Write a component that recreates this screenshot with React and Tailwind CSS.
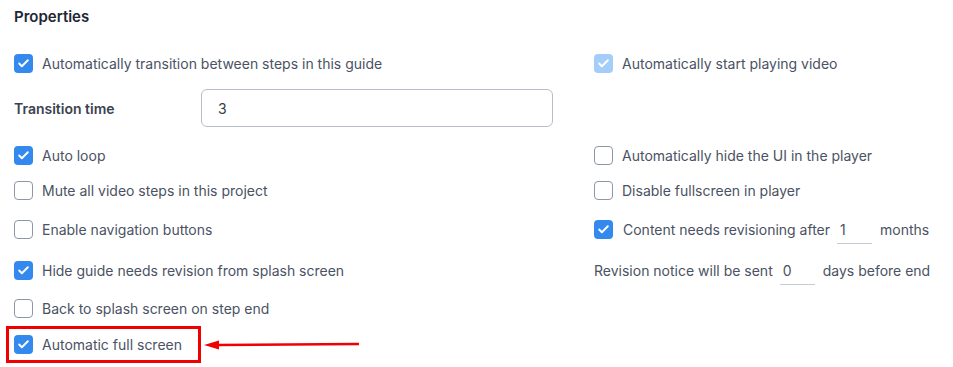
import { Check } from 'lucide-react';

function Box({ checked, disabled }) {
  if (!checked) {
    return <span className="w-[19px] h-[19px] shrink-0 rounded-[4px] border border-[#8e97a6] bg-white" />;
  }
  return (
    <span
      className={`w-[19px] h-[19px] shrink-0 rounded-[4px] flex items-center justify-center ${
        disabled ? 'bg-[#a4cdfa]' : 'bg-[#3389ee]'
      }`}
    >
      <Check size={13} strokeWidth={3.5} color="white" />
    </span>
  );
}

function Item({ label, checked, disabled }) {
  return (
    <label className="flex items-center gap-[9px]">
      <Box checked={checked} disabled={disabled} />
      <span>{label}</span>
    </label>
  );
}

function Row({ children, className = '' }) {
  return <div className={`grid grid-cols-[580px_1fr] items-center h-[30px] ${className}`}>{children}</div>;
}

function Small({ value }) {
  return (
    <span className="inline-block w-[35px] border-b border-[#c7ccd4] pl-[3px] pb-[3px] leading-5">{value}</span>
  );
}

export default function App() {
  return (
    <div
      className="w-[953px] h-[367px] bg-white pl-[14px] text-[14px] text-[#4a5263] overflow-hidden"
      style={{ fontFamily: 'Inter, "Noto Sans", sans-serif' }}
    >
      {/* Header */}
      <h2 className="pt-[6px] h-[24px] text-[15px] font-semibold text-[#1f2633]">Properties</h2>

      <Row className="mt-[24px]">
        <Item label="Automatically transition between steps in this guide" checked />
        <Item label="Automatically start playing video" checked disabled />
      </Row>

      <div className="flex items-center h-[38px] mt-[11px]">
        <span className="w-[187px] font-semibold text-[#3a4250]">Transition time</span>
        <div className="w-[352px] h-[38px] border border-[#b6bdc8] rounded-[6px] flex items-center pl-[16px] text-[#333a46]">
          3
        </div>
      </div>

      <Row className="mt-[13px]">
        <Item label="Auto loop" checked />
        <Item label="Automatically hide the UI in the player" />
      </Row>
      <Row className="mt-[5px]">
        <Item label="Mute all video steps in this project" />
        <Item label="Disable fullscreen in player" />
      </Row>
      <Row className="mt-[9px]">
        <Item label="Enable navigation buttons" />
        <label className="flex items-center">
          <Box checked />
          <span className="ml-[10px]">Content needs revisioning after</span>
          <span className="ml-[7px] mt-[4px]"><Small value="1" /></span>
          <span className="ml-[8px]">months</span>
        </label>
      </Row>
      <Row className="mt-[11px]">
        <Item label="Hide guide needs revision from splash screen" checked />
        <div className="flex items-center">
          <span>Revision notice will be sent</span>
          <span className="ml-[7px] mt-[4px]"><Small value="0" /></span>
          <span className="ml-[8px]">days before end</span>
        </div>
      </Row>
      <Row className="mt-[8px]">
        <Item label="Back to splash screen on step end" />
      </Row>

      {/* Highlighted option */}
      <div className="flex items-center -ml-[8px] mt-[3px]">
        <div className="h-[37px] border-[3px] border-[#f00000] pl-[5px] pr-[16px] flex items-center">
          <Item label="Automatic full screen" checked />
        </div>
        <svg width="158" height="12" viewBox="0 0 158 12" className="ml-[2px]">
          <path d="M14 6 L156 5" stroke="#f00000" strokeWidth="2.5" />
          <path d="M1 6 L16 1.5 L16 10.5 Z" fill="#f00000" />
        </svg>
      </div>
    </div>
  );
}
